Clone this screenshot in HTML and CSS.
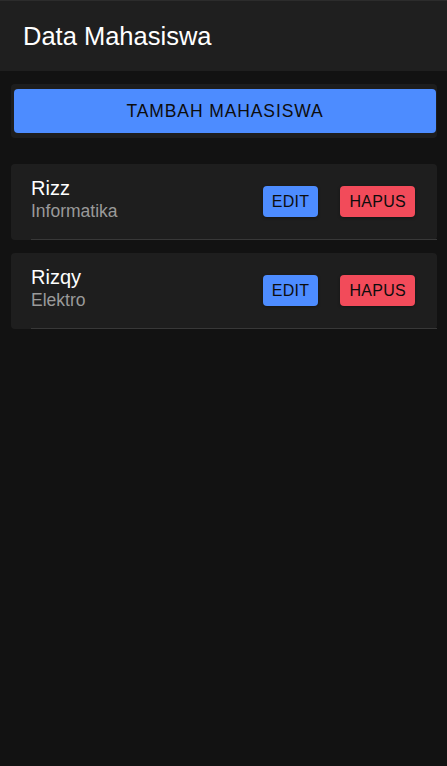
FILE: index.html
```html
<!DOCTYPE html>
<html>
<head>
<meta charset="utf-8">
<link rel="stylesheet" href="styles.css">
</head>
<body>
<header class="toolbar">
  <h1 class="title">Data Mahasiswa</h1>
</header>
<main class="content">
  <div class="add-card">
    <button class="btn btn-add">TAMBAH MAHASISWA</button>
  </div>
  <div class="list">
    <div class="item">
      <div class="item-inner">
        <div class="label">
          <div class="name">Rizz</div>
          <div class="major">Informatika</div>
        </div>
        <div class="actions">
          <button class="btn btn-small btn-edit">EDIT</button>
          <button class="btn btn-small btn-delete">HAPUS</button>
        </div>
      </div>
    </div>
    <div class="item">
      <div class="item-inner">
        <div class="label">
          <div class="name">Rizqy</div>
          <div class="major">Elektro</div>
        </div>
        <div class="actions">
          <button class="btn btn-small btn-edit">EDIT</button>
          <button class="btn btn-small btn-delete">HAPUS</button>
        </div>
      </div>
    </div>
  </div>
</main>
</body>
</html>
```
FILE: styles.css
```css
* { box-sizing: border-box; }
html, body {
  margin: 0;
  padding: 0;
  background: #121212;
  font-family: "Liberation Sans", Arial, sans-serif;
  color: #fff;
  height: 100%;
}
.toolbar {
  height: 71px;
  background: #1f1f1f;
  border-top: 1px solid #2c2c2c;
  display: flex;
  align-items: center;
  padding: 2px 0 0 23px;
}
.title {
  margin: 0;
  font-size: 25.5px;
  font-weight: normal;
  color: #fff;
  line-height: 1;
}
.content {
  padding: 13px 10px 0 11px;
}
.add-card {
  background: #1d1d1d;
  border-radius: 4px;
  padding: 5px 1px 5px 3px;
}
.btn {
  border: none;
  font-family: "Liberation Sans", Arial, sans-serif;
  color: #0d0d0d;
  cursor: pointer;
}
.btn-add {
  width: 100%;
  height: 44px;
  background: #4d8cff;
  border-radius: 4px;
  font-size: 17.5px;
  letter-spacing: 0.9px;
  display: block;
}
.list {
  margin-top: 26px;
  display: flex;
  flex-direction: column;
  gap: 13px;
}
.item {
  background: #1e1e1e;
  border-radius: 4px;
  padding-left: 20px;
}
.item-inner {
  height: 76px;
  display: flex;
  align-items: center;
  border-bottom: 1px solid #383838;
  padding-right: 22px;
}
.label {
  flex: 1;
  padding-bottom: 6px;
}
.name {
  font-size: 20px;
  line-height: 24px;
  color: #fff;
}
.major {
  font-size: 17.5px;
  line-height: 21px;
  color: #9a9a9a;
  margin-top: 1px;
}
.actions {
  display: flex;
  gap: 22px;
  align-items: center;
}
.btn-small {
  height: 31px;
  border-radius: 4px;
  font-size: 16px;
  letter-spacing: 0.3px;
  padding: 0 9px;
  box-shadow: 0 1px 3px rgba(0,0,0,0.35);
}
.btn-edit { background: #4d8cff; }
.btn-delete { background: #f24b5a; }
```
